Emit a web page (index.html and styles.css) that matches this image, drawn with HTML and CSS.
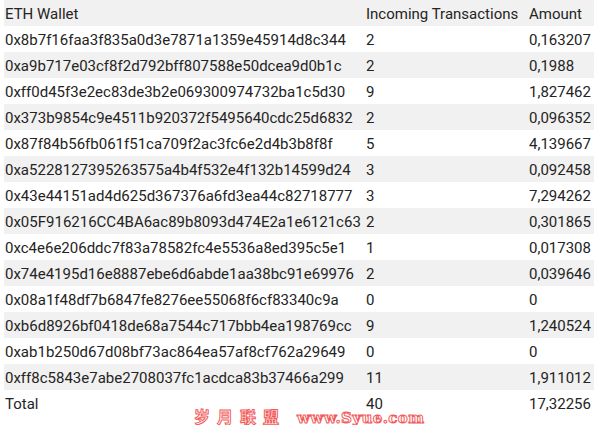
FILE: index.html
```html
<!DOCTYPE html>
<html>
    <head>
        <meta name="viewport" content="width=device-width">
        <title>ETH Wallets</title>
        <link rel="stylesheet" href="styles.css">
    </head>
    <body>
        <div class="visual">
            <table class="grid">
                <tr class="head"><td class="c-wallet">ETH Wallet</td><td class="c-count">Incoming Transactions</td><td class="c-amount">Amount</td></tr>
                <tr><td>0x8b7f16faa3f835a0d3e7871a1359e45914d8c344</td><td>2</td><td>0,163207</td></tr>
                <tr><td>0xa9b717e03cf8f2d792bff807588e50dcea9d0b1c</td><td>2</td><td>0,1988</td></tr>
                <tr><td>0xff0d45f3e2ec83de3b2e069300974732ba1c5d30</td><td>9</td><td>1,827462</td></tr>
                <tr><td>0x373b9854c9e4511b920372f5495640cdc25d6832</td><td>2</td><td>0,096352</td></tr>
                <tr><td>0x87f84b56fb061f51ca709f2ac3fc6e2d4b3b8f8f</td><td>5</td><td>4,139667</td></tr>
                <tr><td>0xa5228127395263575a4b4f532e4f132b14599d24</td><td>3</td><td>0,092458</td></tr>
                <tr><td>0x43e44151ad4d625d367376a6fd3ea44c82718777</td><td>3</td><td>7,294262</td></tr>
                <tr><td>0x05F916216CC4BA6ac89b8093d474E2a1e6121c63</td><td>2</td><td>0,301865</td></tr>
                <tr><td>0xc4e6e206ddc7f83a78582fc4e5536a8ed395c5e1</td><td>1</td><td>0,017308</td></tr>
                <tr><td>0x74e4195d16e8887ebe6d6abde1aa38bc91e69976</td><td>2</td><td>0,039646</td></tr>
                <tr><td>0x08a1f48df7b6847fe8276ee55068f6cf83340c9a</td><td>0</td><td>0</td></tr>
                <tr><td>0xb6d8926bf0418de68a7544c717bbb4ea198769cc</td><td>9</td><td>1,240524</td></tr>
                <tr><td>0xab1b250d67d08bf73ac864ea57af8cf762a29649</td><td>0</td><td>0</td></tr>
                <tr><td>0xff8c5843e7abe2708037fc1acdca83b37466a299</td><td>11</td><td>1,911012</td></tr>
                <tr class="total"><td>Total</td><td>40</td><td>17,32256</td></tr>
            </table>
            <div class="caption">Table Data</div>
            <div class="stamp">
                <span class="stamp-cn">岁月联盟</span>
                <span class="stamp-url">www.Syue.com</span>
            </div>
        </div>
    </body>
</html>
```

FILE: styles.css
```css
body{
    margin:0;
    background:white;
    font-family:Roboto, "Noto Sans", sans-serif;
    color:#252423;
}
.visual{position:relative;width:599px;height:425px;overflow:hidden}

.grid
{
    margin-left:4px;
    width:590px;
    border-collapse:collapse;
    font-size:15px;
}
.grid td{height:24px;padding:2px 0 0 1px;white-space:nowrap;vertical-align:middle;line-height:16px}
.grid tr:nth-child(odd){background:#f1f1f1}
.grid tr.total{background:white}
.c-wallet{width:358px}
.c-count{width:160px}
.grid td:nth-child(2),.grid td:nth-child(3){padding-left:3px}

.caption{margin:6px 0 0 114px;font-size:15px;color:#d4d4d4}

.stamp
{
    position:absolute;
    left:194px;
    top:404px;
    display:flex;
    align-items:center;
    gap:11px;
    color:white;
    -webkit-text-stroke:1px #f25b5b;
    font-weight:bold;
}
.stamp-cn{font-family:"Noto Sans CJK SC", sans-serif;font-size:16px;letter-spacing:7px}
.stamp-url{font-family:"DejaVu Serif", serif;font-size:15px;letter-spacing:0.4px;margin-top:3px}
```
